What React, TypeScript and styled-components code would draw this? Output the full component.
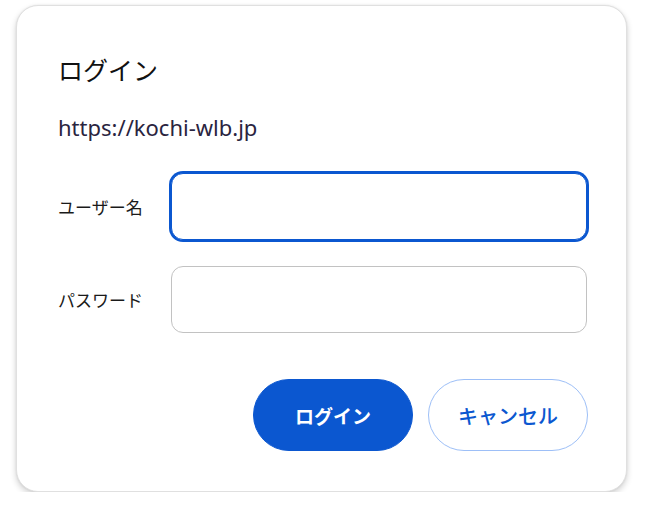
import React, {useState} from "react";
import styled, {createGlobalStyle} from "styled-components";

const GlobalStyle = createGlobalStyle`
    html, body {
        margin: 0;
        padding: 0;
        background: #ffffff;
    }
    * {
        box-sizing: border-box;
    }
`

const FONT = `"Noto Sans CJK JP", "Noto Sans", sans-serif`

export default function App() {
    const [user, setUser] = useState("")
    const [pass, setPass] = useState("")

    return (
        <>
            <GlobalStyle/>
            <Dialog>
                <Title>ログイン</Title>
                <Origin>https://kochi-wlb.jp</Origin>
                <Form onSubmit = {e => e.preventDefault()}>
                    <Row>
                        <Label htmlFor = "user">ユーザー名</Label>
                        <Input id = "user" type = "text" value = {user} active
                               onChange = {e => setUser(e.currentTarget.value)}/>
                    </Row>
                    <Row>
                        <Label htmlFor = "pass">パスワード</Label>
                        <Input id = "pass" type = "password" value = {pass}
                               onChange = {e => setPass(e.currentTarget.value)}/>
                    </Row>
                </Form>
                <Actions>
                    <ActionButton primary>ログイン</ActionButton>
                    <ActionButton>キャンセル</ActionButton>
                </Actions>
            </Dialog>
        </>
    )
}

const Dialog = styled.div`
    margin: 5px 0 0 16px;
    width: 611px;
    height: 487px;
    padding: 45px 38px 0 41px;
    background: #ffffff;
    border: 1px solid #e0e0e0;
    border-radius: 22px;
    box-shadow: 0 3px 6px rgba(0, 0, 0, 0.18), 0 0 2px rgba(0, 0, 0, 0.08);
    font-family: ${FONT};
    display: flex;
    flex-direction: column;
`

const Title = styled.h1`
    margin: 0;
    font-size: 25px;
    line-height: 36px;
    font-weight: 400;
    color: #111111;
`

const Origin = styled.div`
    margin-top: 27px;
    font-family: "Noto Sans", "Open Sans", sans-serif;
    font-size: 22px;
    line-height: 26px;
    color: #2a2440;
`

const Form = styled.form`
    margin-top: 33px;
    display: flex;
    flex-direction: column;
    gap: 26px;
`

const Row = styled.div`
    display: grid;
    grid-template-columns: 113px 416px;
    align-items: center;
`

const Label = styled.label`
    font-size: 17px;
    color: #1a1a1a;
    white-space: nowrap;
`

const Input = styled.input<{ active?: boolean }>`
    width: 416px;
    height: 67px;
    padding: 0 16px;
    border: 1px solid ${props => props.active ? '#0b57d0' : '#c2c2c2'};
    border-radius: 12px;
    box-shadow: ${props => props.active ? '0 0 0 2px #0b57d0' : 'none'};
    outline: none;
    font-family: ${FONT};
    font-size: 18px;
    color: #1f1f1f;
    background: #ffffff;
`

const Actions = styled.div`
    margin-top: 46px;
    display: flex;
    justify-content: flex-end;
    gap: 15px;
`

const ActionButton = styled.button<{ primary?: boolean }>`
    width: 160px;
    height: 72px;
    border-radius: 36px;
    border: 1px solid ${props => props.primary ? '#0b57d0' : '#9dbff7'};
    background: ${props => props.primary ? '#0b57d0' : '#ffffff'};
    color: ${props => props.primary ? '#ffffff' : '#0b57d0'};
    font-family: ${FONT};
    font-size: ${props => props.primary ? '19px' : '20px'};
    font-weight: ${props => props.primary ? 700 : 500};
    cursor: pointer;
`
